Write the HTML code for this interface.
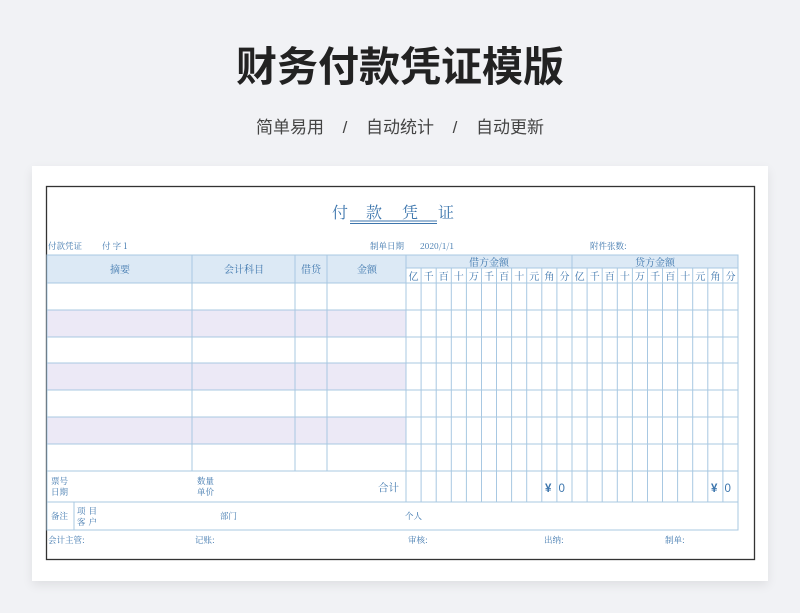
<!DOCTYPE html>
<html><head><meta charset="utf-8"><style>
html,body{margin:0;padding:0;width:800px;height:613px;background:#f1f2f5;overflow:hidden;font-family:"Liberation Sans","Noto Sans CJK SC",sans-serif}
.h1{position:absolute;left:0;width:800px;top:33px;text-align:center;font-size:41px;font-weight:bold;color:#222}
.sub{position:absolute;left:0;width:800px;top:113px;text-align:center;font-size:17px;color:#444}
.sub span{display:inline-block;width:42px;text-align:center}
.card{position:absolute;left:32px;top:166px;width:736px;height:415px;background:#fff;box-shadow:0 4px 10px rgba(0,0,0,0.08)}
svg{position:absolute;left:0;top:0}
svg text{font-family:"Noto Serif CJK SC","Liberation Serif",serif;fill:#3d76ad}
</style></head><body>
<div class="h1">财务付款凭证模版</div>
<div class="sub">简单易用<span>/</span>自动统计<span>/</span>自动更新</div>
<div class="card"></div>
<svg width="800" height="613" viewBox="0 0 800 613">
<rect x="46.5" y="186.5" width="708" height="373" fill="none" stroke="#333" stroke-width="1.3"/>
<text x="332" y="218" font-size="16">付</text>
<text x="366" y="218" font-size="16">款</text>
<text x="402" y="218" font-size="16">凭</text>
<text x="438" y="218" font-size="16">证</text>
<line x1="350" y1="221" x2="437" y2="221" stroke="#3d76ad" stroke-width="1"/>
<line x1="350" y1="223.5" x2="437" y2="223.5" stroke="#3d76ad" stroke-width="1"/>
<g font-size="8.5">
<text x="48" y="249">付款凭证</text><text x="102" y="249">付 字 1</text>
<text x="370" y="249">制单日期</text><text x="420" y="249">2020/1/1</text>
<text x="590" y="249">附件张数:</text>
</g>
<rect x="47" y="255" width="691" height="28" fill="#dce9f5"/>
<rect x="406" y="268" width="332" height="15" fill="#fff"/>
<g fill="#ece9f6">
<rect x="47" y="310" width="359" height="27"/>
<rect x="47" y="363" width="359" height="27"/>
<rect x="47" y="417" width="359" height="27"/>
</g>
<g stroke="#a8c8e2" stroke-width="1" fill="none">
<rect x="47" y="255" width="691" height="275"/>
<line x1="47" y1="283" x2="738" y2="283"/>
<line x1="47" y1="310" x2="738" y2="310"/>
<line x1="47" y1="337" x2="738" y2="337"/>
<line x1="47" y1="363" x2="738" y2="363"/>
<line x1="47" y1="390" x2="738" y2="390"/>
<line x1="47" y1="417" x2="738" y2="417"/>
<line x1="47" y1="444" x2="738" y2="444"/>
<line x1="47" y1="471" x2="738" y2="471"/>
<line x1="47" y1="502" x2="738" y2="502"/>
<line x1="406" y1="268" x2="738" y2="268"/>
<line x1="192" y1="255" x2="192" y2="471"/>
<line x1="295" y1="255" x2="295" y2="471"/>
<line x1="327" y1="255" x2="327" y2="471"/>
<line x1="406" y1="255" x2="406" y2="502"/>
<line x1="572" y1="255" x2="572" y2="502"/>
<line x1="74" y1="502" x2="74" y2="530"/>
<path d="M421.1 268V502M436.2 268V502M451.3 268V502M466.4 268V502M481.5 268V502M496.5 268V502M511.6 268V502M526.7 268V502M541.8 268V502M556.9 268V502M587.1 268V502M602.2 268V502M617.3 268V502M632.4 268V502M647.5 268V502M662.5 268V502M677.6 268V502M692.7 268V502M707.8 268V502M722.9 268V502"/>
</g>
<g font-size="10" text-anchor="middle">
<text x="120" y="273">摘要</text><text x="244" y="273">会计科目</text>
<text x="311" y="273">借贷</text><text x="367" y="273">金额</text>
<text x="489" y="266">借方金额</text><text x="655" y="266">贷方金额</text>
</g>
<g font-size="10" text-anchor="middle">
<text x="413.5" y="280">亿</text><text x="428.6" y="280">千</text><text x="443.7" y="280">百</text><text x="458.8" y="280">十</text><text x="473.9" y="280">万</text><text x="489" y="280">千</text><text x="504.1" y="280">百</text><text x="519.2" y="280">十</text><text x="534.3" y="280">元</text><text x="549.4" y="280">角</text><text x="564.5" y="280">分</text>
<text x="579.6" y="280">亿</text><text x="594.7" y="280">千</text><text x="609.8" y="280">百</text><text x="624.9" y="280">十</text><text x="640" y="280">万</text><text x="655.1" y="280">千</text><text x="670.2" y="280">百</text><text x="685.3" y="280">十</text><text x="700.4" y="280">元</text><text x="715.5" y="280">角</text><text x="730.6" y="280">分</text>
</g>
<g font-size="8.5">
<text x="51" y="484">票号</text><text x="51" y="495">日期</text>
<text x="197" y="484">数量</text><text x="197" y="495">单价</text>
<text x="378" y="491" font-size="10.5">合计</text>
<text x="51" y="519">备注</text>
<text x="77" y="514" letter-spacing="3">项目</text><text x="77" y="525" letter-spacing="3">客户</text>
<text x="220" y="519">部门</text><text x="405" y="519">个人</text>
<text x="48" y="543">会计主管:</text><text x="195" y="543">记账:</text>
<text x="408" y="543">审核:</text><text x="544" y="543">出纳:</text><text x="665" y="543">制单:</text>
</g>
<g font-size="11.5" font-weight="bold">
<text x="545" y="492" style="font-family:'Liberation Sans',sans-serif">¥</text><text x="558.5" y="492" font-weight="normal" style="font-family:'Liberation Sans',sans-serif">0</text>
<text x="711" y="492" style="font-family:'Liberation Sans',sans-serif">¥</text><text x="724.5" y="492" font-weight="normal" style="font-family:'Liberation Sans',sans-serif">0</text>
</g>
</svg>
</body></html>
